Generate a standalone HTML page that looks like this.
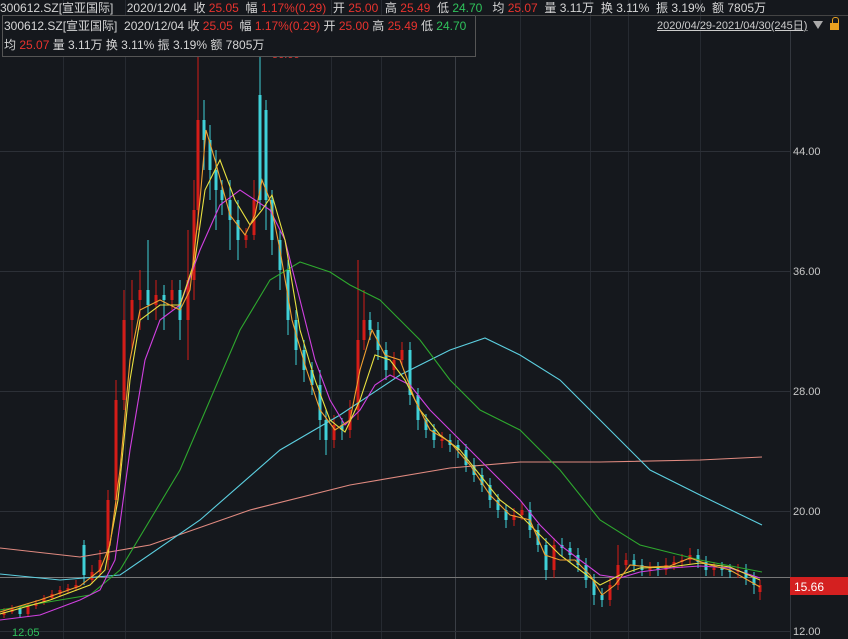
<!DOCTYPE html>
<html><head><meta charset="utf-8">
<style>
html,body{margin:0;padding:0;background:#15181d;width:848px;height:639px;overflow:hidden;font-family:"Liberation Sans","Noto Sans CJK SC",sans-serif;}
.t{position:absolute;font-size:12px;color:#d6d6d6;white-space:nowrap;}
.r{color:#e8332e}.g{color:#2fc25b}
</style></head><body>
<svg width="848" height="639" style="position:absolute;left:0;top:0">
<g stroke="#262a31" stroke-width="1">
<line x1="63.5" y1="0" x2="63.5" y2="639"/><line x1="125.5" y1="0" x2="125.5" y2="639"/>
<line x1="331.5" y1="0" x2="331.5" y2="639"/><line x1="381.5" y1="0" x2="381.5" y2="639"/>
<line x1="520.5" y1="0" x2="520.5" y2="639"/><line x1="590.5" y1="0" x2="590.5" y2="639"/>
<line x1="628.5" y1="0" x2="628.5" y2="639"/><line x1="700.5" y1="0" x2="700.5" y2="639"/>
</g>
<line x1="455.5" y1="30" x2="455.5" y2="639" stroke="#3a3e45"/>
<line x1="790.5" y1="30" x2="790.5" y2="639" stroke="#33373e"/>
<g stroke="#2c3037"><line x1="0" y1="151.5" x2="790" y2="151.5"/><line x1="0" y1="271.5" x2="790" y2="271.5"/><line x1="0" y1="391.5" x2="790" y2="391.5"/><line x1="0" y1="511.5" x2="790" y2="511.5"/><line x1="0" y1="631.5" x2="790" y2="631.5"/></g>
<line x1="0" y1="577.5" x2="790" y2="577.5" stroke="#777"/>

<path fill="none" stroke="#d41c18" stroke-width="1" d="M4 608V618 M12 605V614 M28 603V617 M36 600V609 M44 595V605 M52 590V600 M60 586V597 M68 584V593 M76 580V591 M92 565V584 M100 550V578 M108 490V570 M116 380V510 M124 290V410 M132 280V350 M140 270V330 M156 280V320 M172 280V310 M188 230V360 M194 180V300 M198 55V230 M246 228V248 M254 180V240 M334 415V448 M350 400V438 M358 260V420 M364 290V350 M394 352V378 M402 342V366 M442 432V448 M514 508V526 M522 503V520 M554 538V578 M610 578V606 M618 545V590 M626 553V570 M650 562V576 M666 558V575 M674 556V570 M682 554V568 M690 548V564 M714 562V576 M738 564V578 M760 580V600"/>
<path fill="none" stroke="#d41c18" stroke-width="3" d="M4 612V615 M12 608V612 M28 606V614 M36 603V606 M44 598V603 M52 594V598 M60 590V594 M68 588V590 M76 585V588 M92 572V580 M100 560V572 M108 500V560 M116 400V500 M124 320V400 M132 300V320 M140 290V300 M156 295V305 M172 290V300 M188 280V320 M194 210V280 M198 120V210 M246 235V240 M254 200V235 M334 425V440 M350 410V430 M358 340V410 M364 320V340 M394 360V370 M402 350V360 M442 439V441 M514 515V520 M522 510V515 M554 545V570 M610 585V600 M618 565V585 M626 560V565 M650 568V570 M666 565V570 M674 562V565 M682 560V562 M690 555V560 M714 568V570 M738 570V572 M760 585V592"/>
<path fill="none" stroke="#3fd0d8" stroke-width="1" d="M20 606V617 M84 540V585 M148 240V320 M164 285V330 M180 280V340 M204 100V170 M210 125V200 M216 150V230 M222 180V215 M230 180V250 M238 200V260 M260 50V210 M266 100V230 M272 190V255 M280 230V290 M288 260V335 M296 310V365 M304 340V382 M312 362V395 M320 370V440 M326 410V455 M342 418V440 M370 312V340 M378 322V360 M386 342V380 M410 342V405 M418 388V430 M426 414V438 M434 424V448 M450 434V452 M458 440V458 M466 444V472 M474 458V482 M482 468V492 M490 478V508 M498 494V518 M506 504V528 M530 502V538 M538 524V552 M546 538V580 M562 538V556 M570 542V562 M578 548V572 M586 558V588 M594 574V605 M602 588V607 M634 554V572 M642 559V576 M658 562V576 M698 549V568 M706 556V576 M722 562V576 M730 564V578 M746 564V585 M754 572V594"/>
<path fill="none" stroke="#3fd0d8" stroke-width="3" d="M20 608V614 M84 545V575 M148 290V305 M164 295V300 M180 290V320 M204 120V140 M210 140V170 M216 170V190 M222 190V200 M230 200V220 M238 220V240 M260 95V200 M266 110V200 M272 200V240 M280 240V270 M288 270V320 M296 320V350 M304 350V370 M312 370V385 M320 385V420 M326 420V440 M342 425V430 M370 320V330 M378 330V350 M386 350V370 M410 350V395 M418 395V420 M426 420V430 M434 430V440 M450 440V445 M458 445V450 M466 450V465 M474 465V475 M482 475V485 M490 485V500 M498 500V510 M506 510V520 M530 510V530 M538 530V545 M546 545V570 M562 545V548 M570 548V555 M578 555V565 M586 565V580 M594 580V595 M602 595V600 M634 560V565 M642 565V570 M658 568V570 M698 555V562 M706 562V570 M722 568V570 M730 570V572 M746 570V578 M754 578V585"/>

<polyline fill="none" stroke="#e08a80" stroke-width="1.1" points="0,548 80,557 150,545 250,510 350,485 450,468 520,462 600,462 700,460 762,457"/>
<polyline fill="none" stroke="#5ccfe0" stroke-width="1.1" points="0,574 60,580 120,575 200,520 280,450 340,415 400,375 450,350 485,338 520,355 560,380 600,420 650,470 700,495 762,525"/>
<polyline fill="none" stroke="#2ea82e" stroke-width="1.1" points="0,610 90,595 120,570 180,470 240,330 270,280 300,262 330,272 350,285 380,300 420,340 450,380 480,410 520,430 560,470 600,520 640,545 700,560 762,572"/>
<polyline fill="none" stroke="#d040e0" stroke-width="1.1" points="0,620 40,615 80,600 100,590 115,560 130,450 145,360 160,320 180,305 200,250 220,205 240,190 255,200 270,210 285,240 300,300 315,360 330,400 345,425 360,410 375,385 390,375 410,385 430,410 450,430 470,450 500,480 520,500 540,525 560,545 580,560 600,575 620,578 640,572 670,568 700,566 730,568 760,578"/>
<polyline fill="none" stroke="#e8e040" stroke-width="1.1" points="0,614 50,600 90,585 105,570 118,500 130,380 140,320 160,305 180,305 195,260 205,190 220,160 235,200 250,225 262,210 272,195 285,240 300,330 315,380 330,420 345,432 360,400 375,355 390,360 405,380 420,410 440,435 460,450 480,475 500,500 520,515 540,535 560,555 580,570 600,585 620,575 640,568 670,567 700,563 730,567 760,580"/>
<polyline fill="none" stroke="#f0a030" stroke-width="1.1" points="0,612 40,600 80,586 100,570 110,545 120,470 130,360 140,310 160,300 180,310 190,290 200,200 206,130 215,160 230,215 245,235 255,215 262,180 270,200 280,250 292,320 305,365 320,410 335,430 350,420 360,370 372,330 385,355 400,360 415,400 430,430 450,442 470,465 490,495 510,515 530,520 545,555 560,560 575,560 590,575 602,595 615,585 630,565 650,567 670,566 690,558 710,565 730,570 760,587"/>

<rect x="790" y="577" width="58" height="18" fill="#d42020"/>
<text x="794" y="591" fill="#fff" font-size="12" font-family="Liberation Sans">15.66</text>
<g fill="#c8c8c8" font-size="11" font-family="Liberation Sans"><text x="793" y="155">44.00</text><text x="793" y="275">36.00</text><text x="793" y="395">28.00</text><text x="793" y="515">20.00</text><text x="793" y="635">12.00</text></g>
<text x="12" y="636" fill="#2fc25b" font-size="11" font-family="Liberation Sans">12.05</text>
<text x="272" y="58" fill="#e8332e" font-size="11" font-family="Liberation Sans">56.66</text>
</svg>
<div class="t" style="left:0;top:0;height:16px;line-height:16px;">300612.SZ[宣亚国际]&nbsp;&nbsp;&nbsp; 2020/12/04&nbsp; 收 <span class="r">25.05</span>&nbsp; 幅 <span class="r">1.17%(0.29)</span>&nbsp; 开 <span class="r">25.00</span>&nbsp; 高 <span class="r">25.49</span>&nbsp; 低 <span class="g">24.70</span>&nbsp;&nbsp; 均 <span class="r">25.07</span>&nbsp; 量 3.11万&nbsp; 换 3.11%&nbsp; 振 3.19%&nbsp; 额 7805万</div>
<div style="position:absolute;left:2px;top:15px;width:472px;height:40px;background:#15181d;border:1px solid #555;"></div>
<div class="t" style="left:4px;top:17px;">300612.SZ[宣亚国际]&nbsp; 2020/12/04 收 <span class="r">25.05</span>&nbsp; 幅 <span class="r">1.17%(0.29)</span> 开 <span class="r">25.00</span> 高 <span class="r">25.49</span> 低 <span class="g">24.70</span></div>
<div class="t" style="left:4px;top:36px;">均 <span class="r">25.07</span> 量 3.11万 换 3.11% 振 3.19% 额 7805万</div>
<div style="position:absolute;left:475px;top:15px;width:373px;height:1px;background:#444"></div>
<div class="t" style="left:657px;top:17px;font-size:11px;text-decoration:underline;color:#ccc">2020/04/29-2021/04/30(245日)</div>
<div style="position:absolute;left:813px;top:21px;width:0;height:0;border-left:5px solid transparent;border-right:5px solid transparent;border-top:8px solid #aaa"></div>
<div style="position:absolute;left:830px;top:23px;width:9px;height:7px;background:#e8a020"></div>
<div style="position:absolute;left:832px;top:17px;width:5px;height:5px;border:1px solid #e8a020;border-bottom:none;border-radius:3px 3px 0 0"></div>
</body></html>
